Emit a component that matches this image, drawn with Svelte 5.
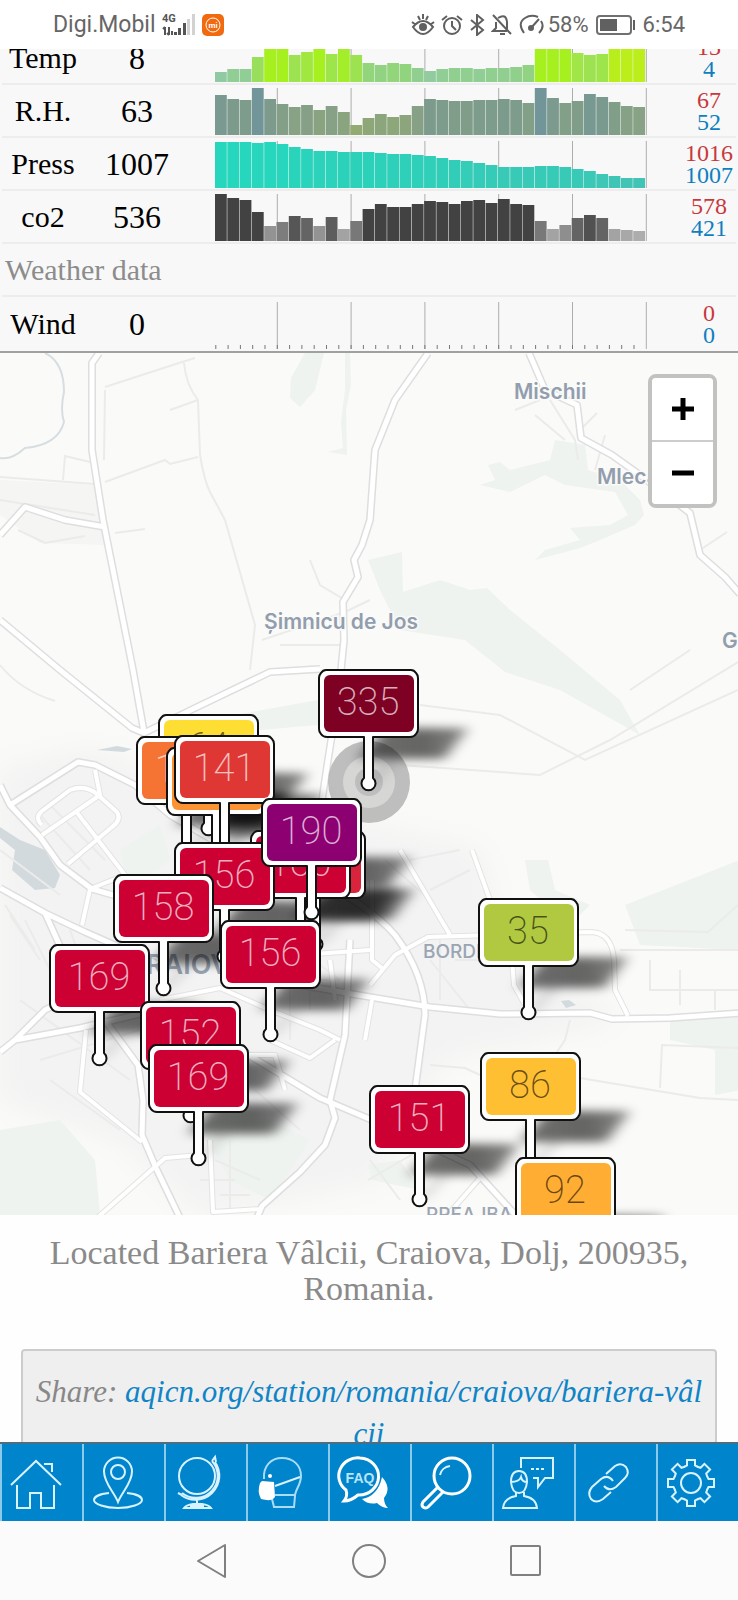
<script>
  const temp = [10,13,13,25,36,40,27,30,36,28,34,27,19,17,19,18,14,11,13,14,14,13,14,14,15,17,38,42,42,29,27,28,46,47,47];
  const rh = [40,36,35,47,36,31,28,30,25,29,23,10,17,21,18,20,29,36,35,34,34,35,35,36,35,32,47,37,32,34,41,38,33,29,28];
  const press = [46,46,46,45,46,44,41,39,37,37,36,36,36,35,34,34,33,32,30,28,27,25,23,21,21,21,22,22,21,19,17,14,12,10,10];
  const co2 = [47,43,41,29,15,19,25,23,15,24,12,20,32,37,34,34,37,40,39,37,40,41,38,42,37,36,20,12,16,23,26,23,12,11,10];

  const rows = [
    { name: 'Temp', now: 8, max: 13, min: 4, bars: temp, stops: [[10,146,201,165],[14,144,207,144],[19,147,213,122],[28,158,228,75],[36,166,240,31],[42,166,240,31],[47,187,238,27]] },
    { name: 'R.H.', now: 63, max: 67, min: 52, bars: rh, stops: [[10,147,170,114],[20,140,165,124],[28,135,162,132],[36,125,155,140],[47,114,149,154]] },
    { name: 'Press', now: 1007, max: 1016, min: 1007, bars: press, stops: [[10,65,196,182],[30,48,206,184],[46,38,215,189]] },
    { name: 'co2', now: 536, max: 578, min: 421, bars: co2, stops: [[10,173,173,173],[15,147,147,147],[20,120,120,120],[25,86,86,86],[29,66,66,66]] }
  ];

  function tint(stops, v) {
    let a = stops[0];
    for (const b of stops) {
      if (v <= b[0]) {
        const t = b[0] === a[0] ? 0 : (v - a[0]) / (b[0] - a[0]);
        return `rgb(${[1, 2, 3].map((i) => Math.round(a[i] + (b[i] - a[i]) * t)).join(',')})`;
      }
      a = b;
    }
    return `rgb(${a.slice(1).join(',')})`;
  }

  const grid = [5, 11, 17, 23, 29, 35];
  const ticks = Array.from({ length: 35 }, (_, i) => i);

  const red = '#cc0033';
  const pins = [
    { x: 158, y: 714, v: 64, c: '#ffde33', dark: true },
    { x: 136, y: 736, v: 136, c: '#f57434' },
    { x: 166, y: 747, v: 112, c: '#fc9332' },
    { x: 174, y: 735, v: 141, c: '#df3734' },
    { x: 318, y: 669, v: 335, c: '#7e0023' },
    { x: 265, y: 830, v: 149, c: '#d9243c' },
    { x: 250, y: 830, v: 160, c: red },
    { x: 174, y: 842, v: 156, c: red },
    { x: 261, y: 798, v: 190, c: '#8c0072' },
    { x: 113, y: 874, v: 158, c: red },
    { x: 220, y: 920, v: 156, c: red },
    { x: 49, y: 944, v: 169, c: red },
    { x: 140, y: 1001, v: 152, c: red },
    { x: 148, y: 1044, v: 169, c: red },
    { x: 478, y: 898, v: 35, c: '#b1c940', dark: true },
    { x: 480, y: 1052, v: 86, c: '#ffbf33', dark: true },
    { x: 369, y: 1085, v: 151, c: red },
    { x: 515, y: 1157, v: 92, c: '#ffae33', dark: true }
  ];

  const major = [
    'M99 353L92 363V450L103 520L133 670L144 732',
    'M0 620L60 670L132 728L144 733L195 708L270 672L320 669',
    'M428 353L395 400L375 450L370 520L362 545L354 560L358 577L343 602L344 640L339 690L328 760L322 800',
    'M529 353L545 390L577 405L581 438L612 455L640 475L690 513L700 555L725 577L740 594',
    'M0 535L25 507L65 520L105 527',
    'M0 785L10 805L78 762L95 765L135 785L170 815L230 850',
    'M10 805L40 837L60 865L92 889L120 897',
    'M0 888L45 913L85 932L160 965M45 913L64 955',
    'M300 870Q370 905 395 935Q425 975 425 1015L415 1090',
    'M300 985L370 997L430 1007L500 1014L590 1013L612 1019L670 1018L740 1013',
    'M0 1052L15 1040L80 1028L140 1014M15 1040L45 1010L95 985',
    'M105 1020L138 1065L143 1100L142 1135L156 1168L180 1218',
    'M240 1050L320 1098L400 1132L470 1165L520 1220',
    'M257 1218L262 1206L300 1172L325 1145L335 1118L330 1100L345 1035L350 940'
  ];
  const minor = [
    'M42 825Q34 818 42 811L70 790Q86 784 98 795L117 812Q122 820 112 827L68 864M42 835L100 795L95 770M75 810L125 875L90 889L82 925',
    'M400 850L450 935M472 850L490 900M370 985L395 955L428 937L590 932Q612 932 614 960L615 990L628 1016',
    'M512 960L514 985L525 1005M372 880L372 960L382 968M372 1000L365 1040',
    'M97 1218L165 1158L200 1155M86 1030L80 1092L142 1142M210 1140L213 1212L262 1209',
    'M160 1000L220 988L270 1010L320 1030L340 1040M335 1000L330 960M270 1040L310 1058L335 1040M250 1055L275 1055L285 1090',
    'M445 1218L480 1178M300 955L370 950'
  ];
  const faint = [
    'M105 387L182 362L195 358M184 363Q186 385 198 400L200 455Q204 480 210 492L225 520L255 625L250 670M170 410L198 400M105 482L165 460L170 464L198 457M0 477L95 484M63 480L65 456L90 462M115 533L145 529M18 530L45 543L85 536M0 500L95 515M105 390L104 460M262 640L345 612L370 600M310 560L320 585L345 600M280 645H340M0 665Q20 690 55 701',
    'M515 410L540 400M535 415L565 440M550 400L575 440L578 460M580 430L597 413M595 470L605 435M700 550L727 532',
    'M420 705L500 715L585 760L738 690M400 765L540 775L610 740L738 662M630 690L690 650',
    'M620 950H738M650 960V990H738M680 970V1005M715 990V1010M625 930L708 932L738 905M580 1078L700 1098L738 1100M660 1088L662 1045L738 1048M570 1020L565 1040L545 1070M430 1065L465 1068L480 1075',
    'M40 815L90 870M50 805L105 860M25 920L60 990M10 915L40 960M70 930L90 985M20 1000L130 1080M40 1060L140 1030M50 1080L120 1130M200 1180H235M215 1160L260 1180M220 1195H250M230 1140V1210M260 920L340 980M270 980H340M290 950V1040M310 940V1010M430 960L470 1010M440 940V1000M455 960H510M385 860L430 900M410 860L460 850M430 890L470 870M0 850L60 895M5 905L35 950M155 1030L200 1080M255 1090L300 1130M370 1160L400 1200M368 1180L420 1150'
  ];
  const greens = [
    'M305 353H324L315 390L300 407L290 398L291 378zM345 353H350L351 385L346 410L347 455L328 452L343 448L341 422L345 390z',
    'M480 485L495 480L488 465L500 462L510 470L550 460L555 440L585 445L588 470L620 480L640 500L644 515L635 525L600 540L580 548L535 560L545 550L580 540L570 528L610 525L628 515L615 492L565 485L545 475L510 492z',
    'M368 560L402 552L403 592L440 580L470 590L487 588L510 610L560 650L620 700L640 735L560 690L505 672L465 640L400 630L380 590z',
    'M0 1130L60 1120L95 1160L100 1215H0zM200 1125L250 1110L310 1140L270 1200L230 1180z',
    'M235 715L318 700V725L260 730z',
    'M625 905L740 860V950L640 945zM670 1020L740 1015V1090L715 1095V1050L670 1040z',
    'M120 850L160 825L170 860L130 890z',
    'M525 860H548L555 890L590 905L570 925L530 890z',
    'M368 1165L400 1160L420 1190L372 1180z'
  ];
  const places = [
    { x: 514, y: 399, t: 'Mischii' },
    { x: 597, y: 484, t: 'Mlecănești' },
    { x: 264, y: 629, t: 'Șimnicu de Jos' },
    { x: 722, y: 648, t: 'Ghercești' }
  ];
  const gearTeeth = [0, 45, 90, 135, 180, 225, 270, 315];
</script>

<div class="phone">
  <header class="status">
    <span class="carrier">Digi.Mobil</span>
    <svg class="signal" viewBox="0 0 34 24" aria-hidden="true">
      <text x="0" y="9">4G</text>
      <path d="M3 22V14M1 16l2-2M7 14v8M5 20l2 2M10 22v-4" fill="none" stroke="#555" stroke-width="2" />
      <path d="M12 22h3v-3h-3zM16 22h3v-7h-3zM21 22h3V10h-3z" fill="#555" />
      <path d="M25 22h3V6h-3zM30 22h3V1h-3z" fill="#d2d2d2" />
    </svg>
    <svg class="mi" viewBox="0 0 22 22" aria-hidden="true">
      <rect width="22" height="22" rx="5" fill="#f26a10" />
      <circle cx="11" cy="11" r="7" fill="none" stroke="#fff" stroke-width="1" />
      <text x="11" y="14">mi</text>
    </svg>
    <span class="spacer"></span>
    <div class="sys">
      <svg width="24" height="22" viewBox="0 0 24 22" aria-hidden="true"><g fill="none" stroke="#606060" stroke-width="2"><path d="M2 13Q12 1 22 13Q12 27 2 13zM1 8l4 3M23 8l-4 3M7 2l2 4M17 2l-2 4M12 0v5" /></g><circle cx="12" cy="13" r="4" fill="#606060" /></svg>
      <svg width="22" height="22" viewBox="0 0 22 22" aria-hidden="true"><g fill="none" stroke="#606060" stroke-width="2"><circle cx="11" cy="12" r="8" /><path d="M1 6l5-4M21 6l-5-4M11 7v5l4 4" /></g></svg>
      <svg width="16" height="22" viewBox="0 0 16 22" aria-hidden="true"><path d="M2 6l12 10-6 5V1l6 5L2 16" fill="none" stroke="#606060" stroke-width="2" /></svg>
      <svg width="22" height="22" viewBox="0 0 22 22" aria-hidden="true"><g fill="none" stroke="#606060" stroke-width="2"><path d="M7 4q8-5 9 4v7M5 8v6l-3 3h14M2 1l18 19M9 20h5" /></g></svg>
      <svg width="26" height="22" viewBox="0 0 26 22" aria-hidden="true"><g fill="none" stroke="#606060" stroke-width="2"><path d="M5 19Q-2 9 6 4Q12 0 19 3M22 7q4 6-2 12M12 14L20 5" /></g><circle cx="12" cy="14" r="3" fill="#606060" /></svg>
      <span>58%</span>
    </div>
    <svg class="battery" viewBox="0 0 40 20" aria-hidden="true"><rect x="1" y="1" width="34" height="18" rx="3" fill="none" stroke="#707070" stroke-width="2" /><path d="M4 4h17v12H4z" fill="#606060" /><path d="M38 5v10" stroke="#606060" stroke-width="2" /></svg>
    <span class="clock">6:54</span>
  </header>

  <main>
    <table class="readings">
      <colgroup><col class="c-name" /><col class="c-now" /><col /><col class="c-range" /></colgroup>
      <tbody>
        {#each rows as row}
          <tr>
            <th scope="row">{row.name}</th>
            <td class="now">{row.now}</td>
            <td class="chart">
              <svg viewBox="0 0 432 47" preserveAspectRatio="none" role="img" aria-label={row.name}>
                {#each grid as g}<path d="M{g * 12.3 + 0.8} 0V47" stroke="#adadad" />{/each}
                {#each row.bars as h, i}
                  <rect x={i * 12.3} y={47 - h} width="11.8" height={h} fill={tint(row.stops, h)} />
                {/each}
              </svg>
            </td>
            <td class="range"><span class="max">{row.max}</span><span class="min">{row.min}</span></td>
          </tr>
        {/each}
        <tr><th class="group" colspan="4" scope="colgroup">Weather data</th></tr>
        <tr class="last">
          <th scope="row">Wind</th>
          <td class="now">0</td>
          <td class="chart">
            <svg viewBox="0 0 432 47" preserveAspectRatio="none" role="img" aria-label="Wind">
              {#each grid as g}<path d="M{g * 12.3 + 0.8} 0V47" stroke="#adadad" />{/each}
              {#each ticks as i}<path d="M{i * 12.3 + 0.8} 43V47" stroke="#777" />{/each}
            </svg>
          </td>
          <td class="range"><span class="max">0</span><span class="min">0</span></td>
        </tr>
      </tbody>
    </table>

    <section class="map" aria-label="Map">
      <svg class="tiles" viewBox="0 353 738 862" preserveAspectRatio="xMidYMin slice">
        <defs>
          <filter id="soft" x="-20%" y="-50%" width="140%" height="200%"><feGaussianBlur stdDeviation="7 5" /></filter>
          <filter id="haze" x="-20%" y="-20%" width="140%" height="140%"><feGaussianBlur stdDeviation="14" /></filter>
          <linearGradient id="shade" x1="0" y1="0" x2="1" y2="0"><stop offset="0" stop-opacity=".55" /><stop offset=".6" stop-opacity=".6" /><stop offset="1" stop-opacity=".45" /></linearGradient>
        </defs>
        <rect y="353" width="738" height="862" fill="#fafaf8" />
        <path d="M0 770L90 750L240 800L480 850L500 930L620 1020L440 1060L380 1180L200 1215L120 1140L0 1100z" fill="#f2f3f2" filter="url(#haze)" />
        <path d="M0 480L95 485L105 545L40 543L0 515z" fill="#f5f5f4" />
        {#each greens as d}<path {d} fill="#eef3ef" />{/each}
        <path d="M0 827L20 840L45 850L60 875L55 888L35 890L12 870L15 850L0 838z" fill="#d3dade" />
        <path d="M97 750l20-4 15 3-8 3zM561 1001l8-1 7 5-10 3z" fill="#d3dade" />
        <path d="M45 353Q64 362 64 392Q60 410 64 422Q58 445 25 448Q12 460 0 458" fill="none" stroke="#d6dee2" stroke-width="2" />
        {#each faint as d}<path {d} fill="none" stroke="#ebebea" stroke-width="2" />{/each}
        <g fill="none" stroke-linejoin="round">
          {#each minor as d}<path {d} stroke="#e3e3e2" stroke-width="6" />{/each}
          {#each major as d}<path {d} stroke="#dedede" stroke-width="8" />{/each}
          {#each minor as d}<path {d} stroke="#fff" stroke-width="4" />{/each}
          {#each major as d}<path {d} stroke="#fff" stroke-width="5" />{/each}
        </g>
        <g class="place">
          {#each places as p}<text x={p.x} y={p.y}>{p.t}</text>{/each}
        </g>
        <g class="suburb">
          <text x="423" y="958">BORDEI</text>
          <text x="426" y="1221">PREAJBA</text>
        </g>
        <text class="city" x="126" y="974">CRAIOVA</text>
        <g opacity=".85">
          <circle cx="369" cy="782" r="41" fill="#b4b4b4" />
          <circle cx="369" cy="782" r="26" fill="#d0d0d0" />
          <circle cx="369" cy="782" r="14" fill="#b4b4b4" />
        </g>
        {#each pins as p}
          <g transform="translate({p.x} {p.y})" filter="url(#soft)">
            <path d="M68 59H150L126 90H40z" fill="url(#shade)" />
            <path d="M52 114L76 90" stroke="#000" stroke-opacity=".2" stroke-width="5" />
          </g>
        {/each}
        {#each pins as p}
          <g transform="translate({p.x} {p.y})">
            <path d="M8 1H93Q96 1 98 4Q100 6 100 9V60Q100 63 98 65Q96 68 92 68H55V109A7 7 0 1 1 46 109V68H9Q5 68 3 65Q1 63 1 60V9Q1 6 3 4Q5 1 8 1z" fill="#fff" stroke="#111" stroke-width="2" stroke-linejoin="round" />
            <rect x="6" y="6" width="90" height="57" rx="6" fill={p.c} />
            <text class="aqi" class:dark={p.dark} x="50" y="46">{p.v}</text>
          </g>
        {/each}
      </svg>
      <div class="zoom">
        <button aria-label="Zoom in"><svg viewBox="0 0 22 22"><path d="M11 0v22M0 11h22" stroke="#000" stroke-width="5" /></svg></button>
        <button aria-label="Zoom out"><svg viewBox="0 0 22 22"><path d="M0 11h22" stroke="#000" stroke-width="5" /></svg></button>
      </div>
    </section>

    <p class="located">Located Bariera Vâlcii, Craiova, Dolj, 200935, Romania.</p>
    <p class="share">Share: <a href="#share">aqicn.org/station/romania/craiova/bariera-vâlcii</a></p>
  </main>

  <nav class="tools" aria-label="Site">
    <a href="#home" aria-label="Home"><svg viewBox="0 0 52 54"><path d="M1 29L26 5L51 29M34 8H42V16M7 29V52H20V37H31V52H44V29" /></svg></a>
    <a href="#here" aria-label="Here"><svg viewBox="0 0 52 54"><circle cx="26" cy="16" r="7" /><path d="M26 46C22 36 12 27 12 15.500a14 14 0 0 1 28 0C40 27 30 36 26 46z" /><path d="M17 37C7 38 2 41 2 44c0 4 11 8 24 8s24-4 24-8c0-3-5-6-15-7" /></svg></a>
    <a href="#world" aria-label="World"><svg viewBox="0 0 52 54"><circle cx="23" cy="20" r="18" /><path d="M38 5A22 22 0 0 1 8 37M41 6A24 24 0 0 1 7 39M38 5l3-4 1 5M4 37l4 2M23 43v5M10 52h27q-2-3-9-4h-9q-7 1-9 4zM16 50h14" /></svg></a>
    <a href="#mask" aria-label="Masks"><svg viewBox="0 0 52 54"><path class="thin" d="M8 23C7 10 15 2 26 2S45 9 45 20C45 29 39 34 39 40L38 51H18L16 43M19 39H39" /><path d="M19 30L44 21" /><path class="solid" d="M6 25L18 26L19 41Q16 46 5 43Q1 36 4 27z" /><circle class="solid" cx="14" cy="20" r="2" /></svg></a>
    <a href="#faq" aria-label="FAQ"><svg viewBox="0 0 52 54"><path class="bold" d="M22 2A19 18 0 1 1 20 39Q13 45 6 45Q10 40 8 34A19 18 0 0 1 22 2z" /><path class="solid" d="M44 21Q54 32 46 42Q46 48 50 52Q44 52 39 47Q30 49 24 43Q40 40 44 21z" /><text x="22" y="27">FAQ</text></svg></a>
    <a href="#search" aria-label="Search"><svg viewBox="0 0 52 54"><circle class="bold" cx="32" cy="20" r="18" /><path d="M20 19A12 11 0 0 1 30 10" /><path class="bold" d="M18 31L3 46Q1 49 3 51Q6 53 8 51L23 36" /></svg></a>
    <a href="#contact" aria-label="Contact"><svg viewBox="0 0 52 54"><path d="M19 12V2H51V22H43L36 31V22H31M9 26q0-11 8-11t8 11q-1 11-8 11t-8-11zM9 26q8 0 10-5q1 5 6 5M14 36v4Q2 42 1 52H35Q34 42 22 40V36" /><path d="M29 13h3M34 13h3M39 13h3" /></svg></a>
    <a href="#link" aria-label="Link"><svg viewBox="0 0 52 54"><path d="M22 18L31 10Q37 6 42 11Q46 17 41 22L32 31Q25 36 20 30M27 36L19 43Q12 48 7 43Q3 37 8 31L17 23Q24 18 29 25" /></svg></a>
    <a href="#settings" aria-label="Settings"><svg viewBox="0 0 52 54"><g transform="translate(25 27)">{#each gearTeeth as a}<path transform="rotate({a})" d="M-7 -16L-4 -17.500V-23H4V-17.500L7 -16" />{/each}<circle r="10" /></g></svg></a>
  </nav>
  <div class="softkeys">
    <button aria-label="Back"><svg viewBox="0 0 34 34"><path d="M3 17L30 1V33z" /></svg></button>
    <button aria-label="Home screen"><svg viewBox="0 0 34 34"><circle cx="17" cy="17" r="16" /></svg></button>
    <button aria-label="Recent apps"><svg viewBox="0 0 34 34"><rect x="2" y="2" width="29" height="29" rx="1" /></svg></button>
  </div>
</div>

<style>
  :global(body) { margin: 0; }
  .phone {
    height: 100vh;
    display: flex;
    flex-direction: column;
    overflow: hidden;
    background: #fefefe;
    font-family: "Liberation Serif", serif;
  }
  .status {
    position: relative;
    z-index: 2;
    flex: none;
    box-sizing: border-box;
    height: 49px;
    padding: 0 53px;
    display: flex;
    align-items: center;
    background: #fff;
    color: #666;
    font: 22px Roboto, sans-serif;
  }
  .carrier { font-size: 23px; }
  .signal { width: 34px; height: 24px; margin: 0 6px; }
  .signal text { font: 700 11px Roboto, sans-serif; fill: #555; }
  .mi { width: 22px; height: 22px; }
  .mi text { font: 700 8px Roboto, sans-serif; fill: #fff; text-anchor: middle; }
  .spacer { flex: 1; }
  .sys { display: flex; align-items: center; gap: 6px; }
  .sys span { margin-left: -3px; }
  .battery { width: 40px; height: 20px; margin: 0 7px; }

  main { flex: 1; min-height: 0; overflow: hidden; }
  .readings {
    width: 100%;
    margin-top: -17px;
    padding: 0 2px;
    table-layout: fixed;
    border-collapse: separate;
    border-spacing: 0;
    background: #f8f8f8;
    border-bottom: 2px solid #a0a0a0;
  }
  .c-name { width: 82px; }
  .c-now { width: 106px; }
  .c-range { width: 54px; }
  th, td {
    box-sizing: border-box;
    height: 53px;
    padding: 0;
    border-bottom: 2px solid #ededed;
    text-align: center;
    vertical-align: middle;
    font-weight: 400;
  }
  .last th, .last td { height: 54px; border-bottom: 0; }
  th { font-size: 30px; line-height: 32px; }
  .now { font-size: 32px; line-height: 36px; }
  .group { padding-left: 3px; text-align: left; color: #8c8c8c; }
  .chart { padding: 2px 35px 0 25px; }
  .chart svg { display: block; width: 100%; height: 47px; }
  .range { font-size: 24px; line-height: 22px; }
  .range span { display: block; }
  .max { color: #c8393d; }
  .min { color: #0f7fc0; }

  .map { position: relative; height: 862px; overflow: hidden; background: #fafaf8; }
  .tiles { display: block; width: 100%; height: 100%; }
  .place text { font: 600 21px Inter, sans-serif; fill: #929eae; stroke: #fafaf8; stroke-width: 3px; paint-order: stroke; }
  .suburb text { font: 500 19px Inter, sans-serif; fill: #9aa5b3; }
  .city { font: 600 27px Inter, sans-serif; fill: #98a3b2; }
  .aqi { font: 200 38px Roboto, sans-serif; fill: #fff; fill-opacity: .7; text-anchor: middle; }
  .aqi.dark { fill: #000; fill-opacity: .6; }
  .zoom {
    position: absolute;
    top: 21px;
    right: 21px;
    border: 4px solid #c2c2c0;
    border-radius: 8px;
    overflow: hidden;
  }
  .zoom button {
    display: flex;
    align-items: center;
    justify-content: center;
    width: 61px;
    height: 62px;
    padding: 0;
    border: 0;
    background: #fff;
  }
  .zoom button + button { border-top: 2px solid #ccc; height: 64px; }
  .zoom svg { width: 22px; height: 22px; }

  .located {
    margin: 0;
    padding: 20px 40px 0;
    text-align: center;
    color: #8a8a8a;
    font-size: 34px;
    line-height: 36px;
  }
  .share {
    margin: 42px 21px 0;
    padding: 20px 10px;
    border: 2px solid #ccc;
    border-radius: 4px;
    background: #efefef;
    text-align: center;
    color: #888;
    font-size: 31px;
    font-style: italic;
    line-height: 42px;
    word-break: break-all;
  }
  .share a { color: #0f84c6; text-decoration: none; }

  .tools {
    flex: none;
    display: grid;
    grid-template-columns: repeat(9, 1fr);
    border-top: 2px solid #4e6e80;
    background: #0084cb;
  }
  .tools a {
    display: flex;
    align-items: center;
    justify-content: center;
    height: 77px;
    padding-right: 12px;
    border-left: 2px solid #8ccaec;
  }
  .tools svg {
    width: 52px;
    height: 54px;
    fill: none;
    stroke: #d8f2ff;
    stroke-width: 2;
    overflow: visible;
  }
  .tools .thin { stroke: #a8dcf7; }
  .tools .bold { stroke: #fff; stroke-width: 3; }
  .tools .solid { fill: #fff; stroke: none; }
  .tools text { font: 700 14px "Liberation Sans", sans-serif; fill: #b9e4fa; stroke: none; text-anchor: middle; }

  .softkeys {
    flex: none;
    height: 79px;
    display: flex;
    align-items: center;
    justify-content: center;
    gap: 123px;
    background: #fbfbfb;
  }
  .softkeys button { width: 34px; height: 34px; padding: 0; border: 0; background: none; }
  .softkeys svg { display: block; width: 34px; height: 34px; fill: none; stroke: #808080; stroke-width: 2; stroke-linejoin: round; overflow: visible; }
</style>
